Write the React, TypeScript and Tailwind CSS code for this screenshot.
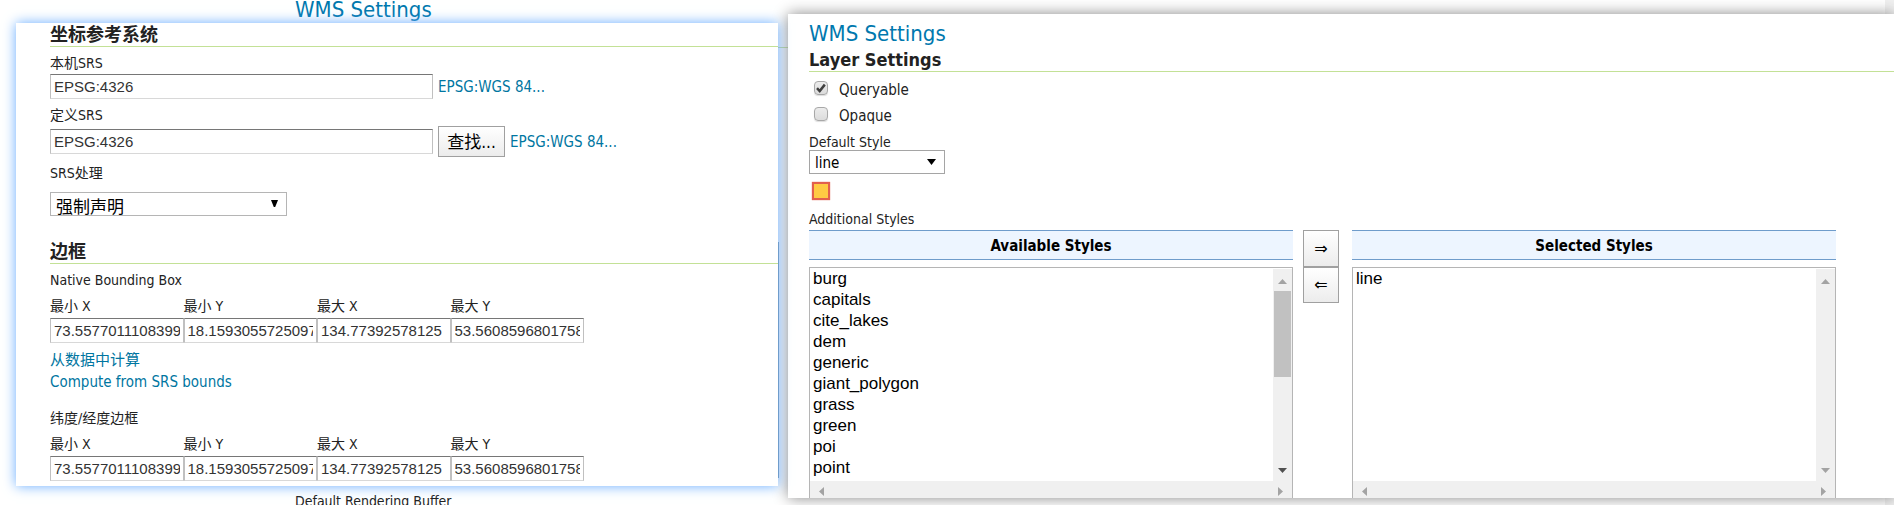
import React, { useState } from "react";

const AVAILABLE = ["burg", "capitals", "cite_lakes", "dem", "generic", "giant_polygon", "grass", "green", "poi", "point"];
const BOUNDS: [string, string][] = [
  ["最小 X", "73.5577011108399"],
  ["最小 Y", "18.1593055725097"],
  ["最大 X", "134.77392578125"],
  ["最大 Y", "53.5608596801758"],
];

const inputClass =
  "h-[25px] min-w-0 border border-[#c0c0c0] border-t-[#767676] border-b-[#d8d8d8] bg-white px-[3px] font-['Liberation_Sans',sans-serif] text-[15px] text-[#333] outline-none";
const buttonClass = "border border-[#a0a0a0] bg-linear-to-b from-white to-[#ececec] text-black";
const linkClass = "text-[15px] text-[#0076a1]";

function SectionTitle({ children }: { children: React.ReactNode }) {
  return (
    <h3 className="border-b border-[#c3e196] text-lg leading-[23px] font-bold text-[#222]">{children}</h3>
  );
}

function Arrow({ dir, className }: { dir: "up" | "down" | "left" | "right"; className: string }) {
  const points = {
    up: "0,7 4.5,2 9,7",
    down: "0,2 9,2 4.5,7",
    left: "7,0 2,4.5 7,9",
    right: "2,0 7,4.5 2,9",
  }[dir];
  return (
    <svg viewBox="0 0 9 9" className={className} aria-hidden="true">
      <polygon points={points} fill="currentColor" />
    </svg>
  );
}

function Bounds({ title, prefix }: { title: string; prefix: string }) {
  return (
    <fieldset>
      <legend className="leading-4">{title}</legend>
      <div className="mt-2.5 grid w-[534px] grid-cols-4">
        {BOUNDS.map(([label, value], i) => (
          <div key={label} className="flex flex-col gap-1">
            <label htmlFor={prefix + i} className="leading-4">{label}</label>
            <input id={prefix + i} className={inputClass} defaultValue={value} />
          </div>
        ))}
      </div>
    </fieldset>
  );
}

function StyleList({ title, items, scrollable }: { title: string; items: string[]; scrollable?: boolean }) {
  return (
    <div className="flex w-[484px] flex-col">
      <h4 className="h-[30px] border-y border-[#6f9ccb] bg-[#edf5ff] text-center text-[15px] leading-[30px] font-bold text-black">
        {title}
      </h4>
      <div className="mt-[7px] flex h-[231px] flex-col border border-b-0 border-[#b5b5b5] bg-white">
        <div className="flex min-h-0 flex-1">
          <select
            multiple
            aria-label={title}
            className="min-w-0 flex-1 appearance-none overflow-hidden bg-white pt-px pl-[3px] font-['Liberation_Sans',sans-serif] text-[17px] text-black outline-none"
          >
            {items.map((item) => (
              <option key={item} className="h-[21px] p-0 leading-[21px]">{item}</option>
            ))}
          </select>
          <div className="mt-px flex w-[19px] flex-col items-center bg-[#f0f0f0] pt-2 pb-1.5 text-[#a3a3a3]">
            <Arrow dir="up" className="size-[9px]" />
            {scrollable && <div className="mt-[5px] h-[86px] w-[17px] bg-[#c1c1c1]" />}
            <Arrow dir="down" className={scrollable ? "mt-auto size-[9px] text-[#505050]" : "mt-auto size-[9px]"} />
          </div>
        </div>
        <div className="flex h-[17px] items-center justify-between bg-[#f0f0f0] px-[7px] pt-1 text-[#a3a3a3]">
          <Arrow dir="left" className="size-[9px]" />
          <Arrow dir="right" className="size-[9px]" />
        </div>
      </div>
    </div>
  );
}

function CheckRow({ id, label, initial }: { id: string; label: string; initial: boolean }) {
  const [on, setOn] = useState(initial);
  return (
    <div className="flex h-[26px] items-center gap-[11px] pl-[5px]">
      <span className="relative mb-1.5 size-3.5">
        <input
          id={id}
          type="checkbox"
          checked={on}
          onChange={() => setOn(!on)}
          className="block size-3.5 appearance-none rounded-sm border border-[#a8a8a8] bg-linear-to-b from-[#ececec] to-[#dcdcdc] shadow-[0_1px_1px_#ddd]"
        />
        {on && (
          <svg viewBox="0 0 14 14" className="pointer-events-none absolute inset-0" aria-hidden="true">
            <path d="M3 7.2 L5.7 10 L10.8 3.6" fill="none" stroke="#3f3f3f" strokeWidth="2.5" />
          </svg>
        )}
      </span>
      <label htmlFor={id} className="text-[15px]">{label}</label>
    </div>
  );
}

export default function App() {
  return (
    <div className="relative min-h-screen overflow-hidden bg-white font-['DejaVu_Sans_Condensed','Noto_Sans_CJK_SC',sans-serif] text-sm text-[#222]">
      <div className="flex min-h-screen">
        <main className="flex flex-1 flex-col justify-between pl-[295px]">
          <h2 className="h-12 border-b border-[#c3e196] text-[22px] leading-5 text-[#0078ae]">WMS Settings</h2>
          <p className="h-3 leading-4">Default Rendering Buffer</p>
        </main>
        <div className="w-[9px] bg-[#f0f0f0]" />
      </div>

      <div className="absolute inset-0 grid grid-cols-[762fr_1106fr] items-start gap-2.5 pl-4">
        <section className="relative mt-[23px] min-w-0 bg-white pb-[5px] pl-[34px] shadow-[0_0_12px_#69adff]">
          <SectionTitle>坐标参考系统</SectionTitle>
          <div className="flex flex-col">
            <label htmlFor="native" className="mt-2 mb-[3px] leading-4">本机SRS</label>
            <div className="flex items-center gap-[5px]">
              <input id="native" className={`w-[383px] ${inputClass}`} defaultValue="EPSG:4326" />
              <a href="#native" className={`pt-0.5 ${linkClass}`}>EPSG:WGS 84...</a>
            </div>
            <label htmlFor="declared" className="mt-2 mb-[3px] leading-4">定义SRS</label>
            <div className="flex items-center gap-[5px]">
              <input id="declared" className={`w-[383px] ${inputClass}`} defaultValue="EPSG:4326" />
              <button className={`h-[31px] w-[67px] text-[17px] leading-7 ${buttonClass}`}>查找...</button>
              <a href="#declared" className={`pt-0.5 ${linkClass}`}>EPSG:WGS 84...</a>
            </div>
            <label htmlFor="handling" className="mt-2 leading-4">SRS处理</label>
            <div className="relative mt-[11px] w-[237px]">
              <select
                id="handling"
                className="block h-6 w-full appearance-none overflow-hidden border border-[#b5b5b5] bg-white pt-1 pl-[5px] text-[17px] leading-5 text-black outline-none"
              >
                <option>强制声明</option>
              </select>
              <svg viewBox="0 0 7 7" className="pointer-events-none absolute top-2 right-[9px] size-[7px]" aria-hidden="true">
                <path d="M0 0H7L4.2 7H2.8Z" />
              </svg>
            </div>
          </div>

          <div className="mt-6 mb-2">
            <SectionTitle>边框</SectionTitle>
          </div>
          <Bounds title="Native Bounding Box" prefix="native-bounds-" />
          <div className="mt-1.5 mb-[17px] flex flex-col items-start leading-[22px]">
            <a href="#data" className={linkClass}>从数据中计算</a>
            <a href="#srs" className={linkClass}>Compute from SRS bounds</a>
          </div>
          <Bounds title="纬度/经度边框" prefix="latlon-bounds-" />
          <div className="absolute top-[219px] -right-px bottom-2 w-px bg-[#6f9ccb]" />
        </section>

        <section className="mt-3.5 min-w-0 bg-white pt-1.5 pl-[21px] shadow-[0_0_14px_#888]">
          <h2 className="text-[22px] leading-7 text-[#0078ae]">WMS Settings</h2>
          <SectionTitle>Layer Settings</SectionTitle>
          <div className="mt-1.5">
            <CheckRow id="queryable" label="Queryable" initial={true} />
            <CheckRow id="opaque" label="Opaque" initial={false} />
          </div>
          <label htmlFor="style" className="mt-1 block leading-4">Default Style</label>
          <div className="relative w-[136px]">
            <select
              id="style"
              className="block h-6 w-full appearance-none border border-[#a5a5a5] bg-white pt-0.5 pl-[5px] text-[15px] text-black outline-none"
            >
              <option>line</option>
            </select>
            <svg viewBox="0 0 9 6" className="pointer-events-none absolute top-[9px] right-[9px] h-1.5 w-[9px]" aria-hidden="true">
              <path d="M0 0H9L4.5 6Z" />
            </svg>
          </div>
          <div className="mt-2 ml-[3px] size-[18px] border-2 border-[#e2604d] bg-[#ffcb43] shadow-[0_0_1px_#e2604d]" />
          <p className="mt-[11px] mb-[3px] leading-4">Additional Styles</p>
          <div className="flex items-start">
            <StyleList title="Available Styles" items={AVAILABLE} scrollable />
            <div className="mr-[13px] ml-2.5 flex w-9 flex-col">
              <button aria-label="Add style" className={`h-[37px] font-['DejaVu_Sans',sans-serif] text-base ${buttonClass}`}>⇒</button>
              <button aria-label="Remove style" className={`h-9 font-['DejaVu_Sans',sans-serif] text-base ${buttonClass}`}>⇐</button>
            </div>
            <StyleList title="Selected Styles" items={["line"]} />
          </div>
        </section>
      </div>
    </div>
  );
}
